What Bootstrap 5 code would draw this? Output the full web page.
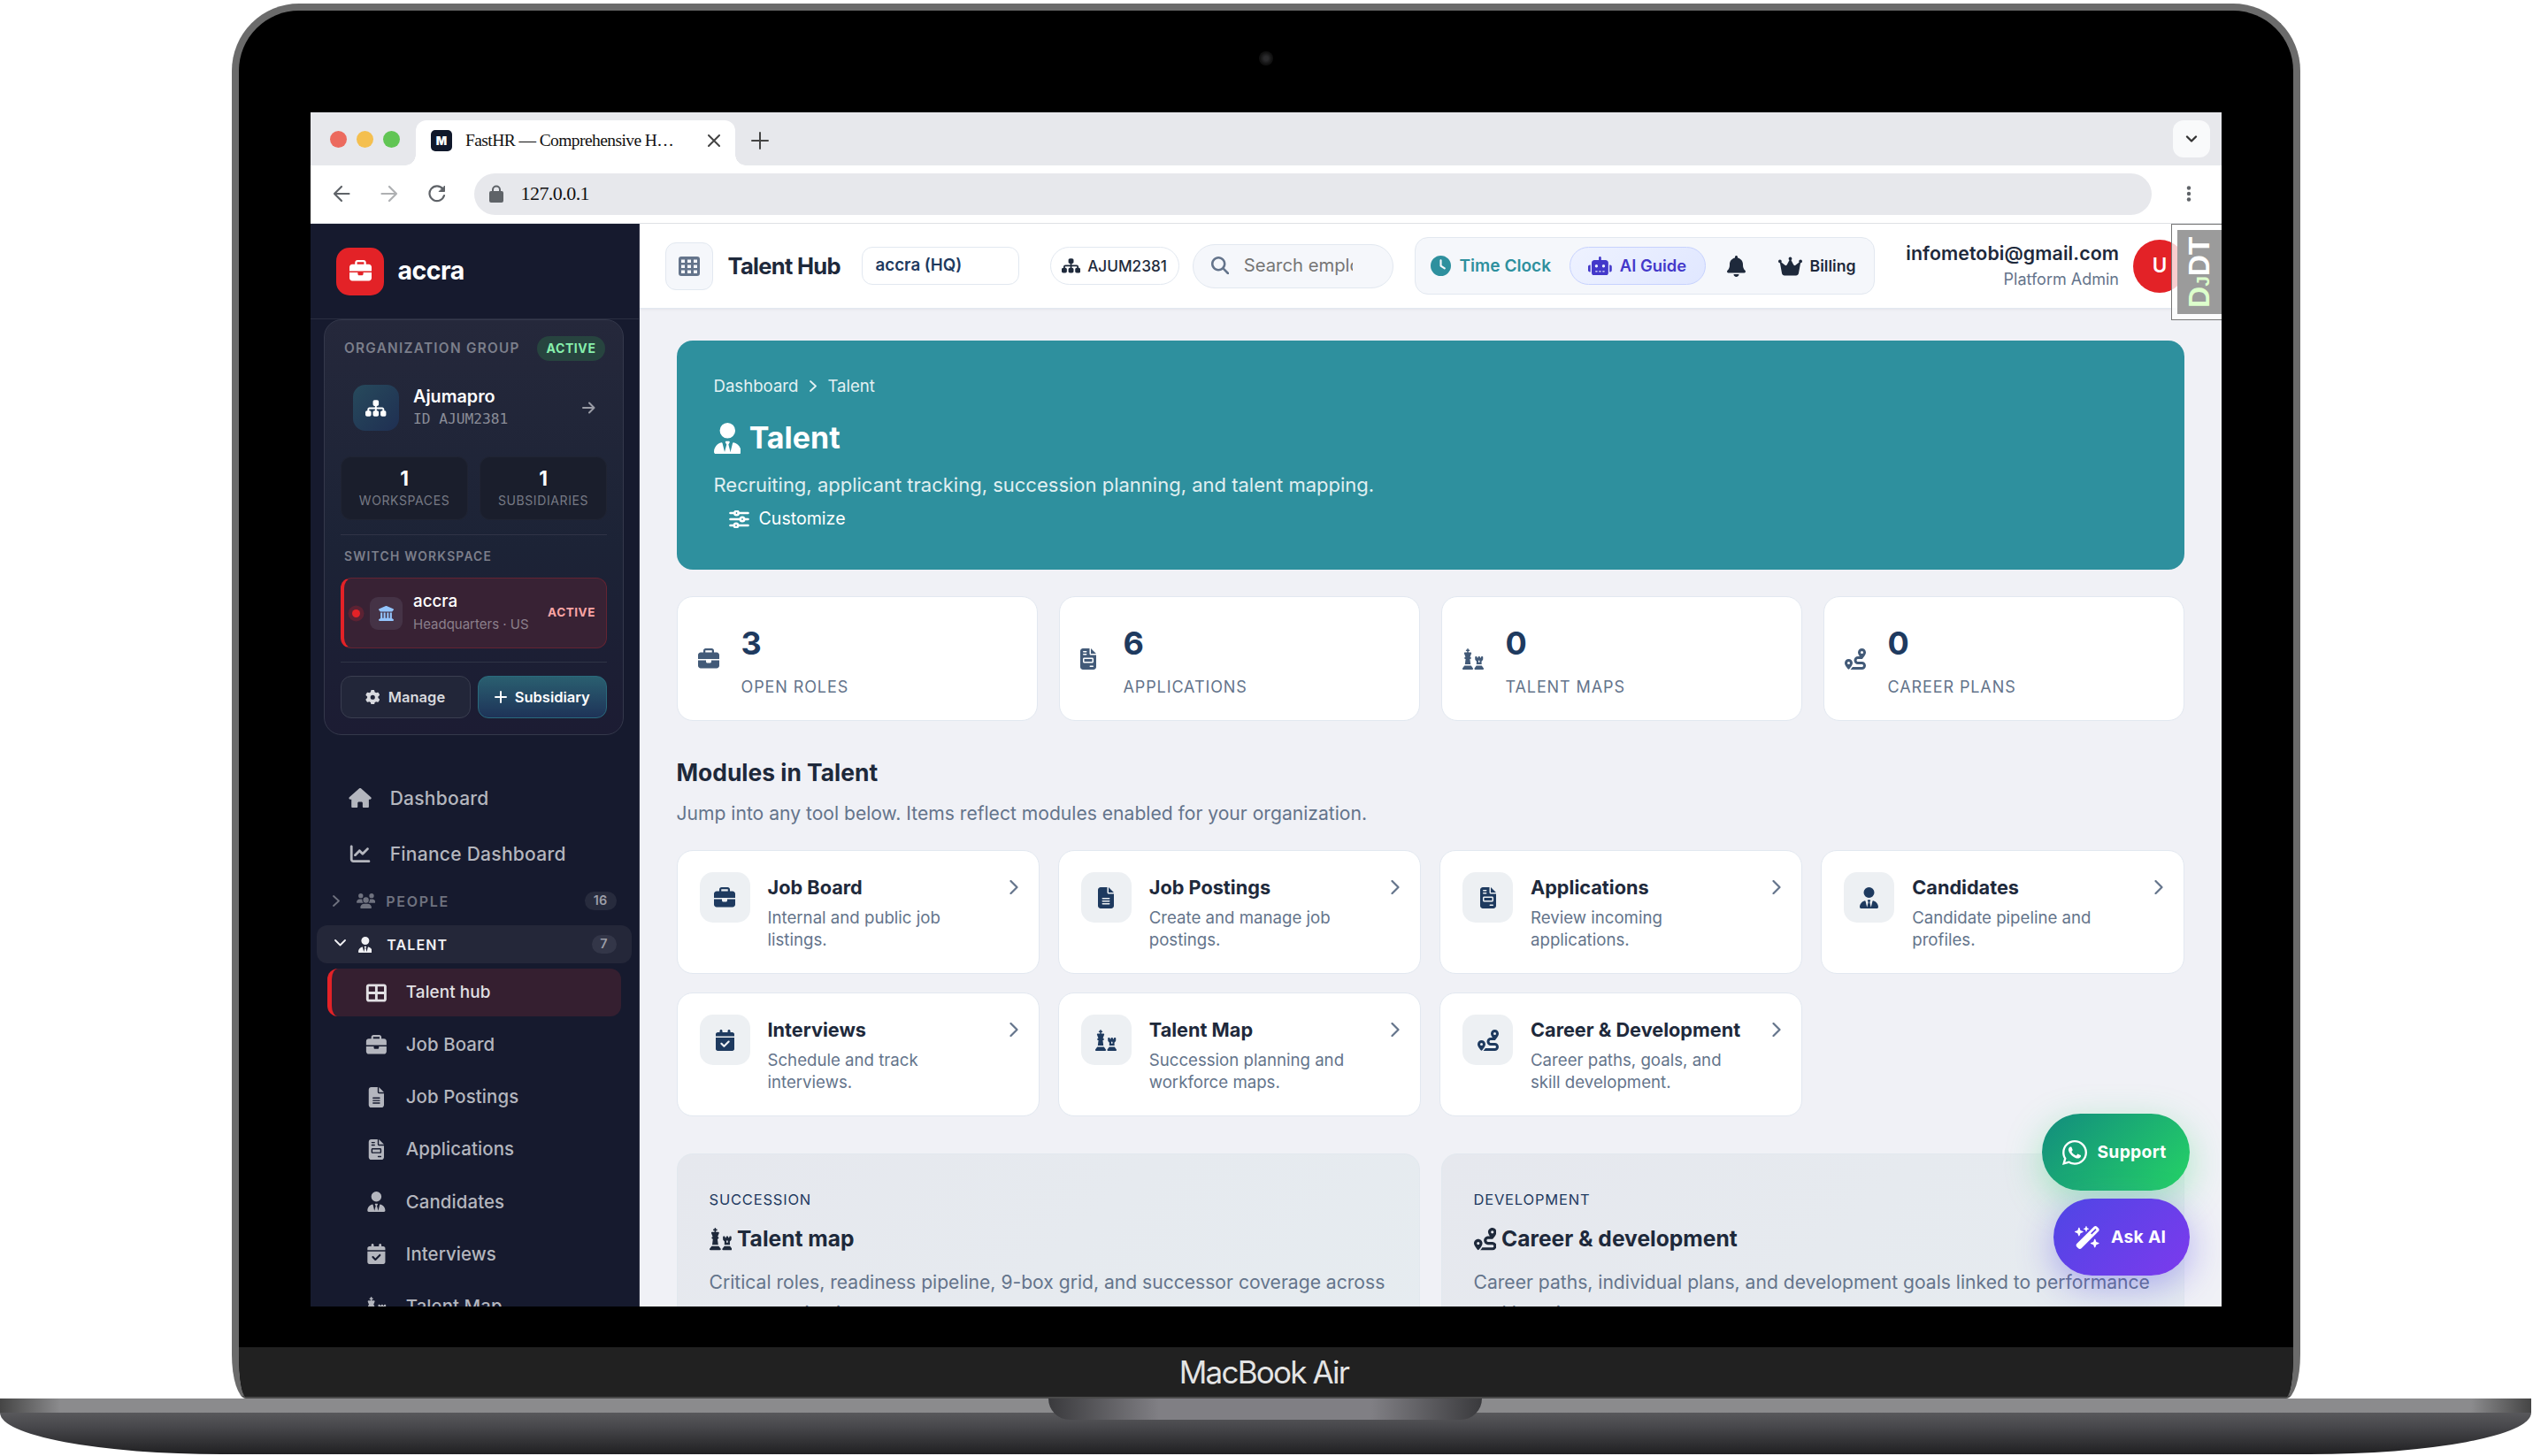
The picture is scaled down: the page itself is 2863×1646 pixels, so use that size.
<!DOCTYPE html>
<html lang="en">
<head>
    <meta charset="UTF-8">
    <meta name="viewport" content="width=device-width, initial-scale=1.0">
    <title>FastHR — Comprehensive HR</title>
    <!-- Bootstrap CSS -->
    <link href="https://cdn.jsdelivr.net/npm/bootstrap@5.3.0/dist/css/bootstrap.min.css" rel="stylesheet">
    <style>
        body {
            font-family: Inter, "Liberation Sans", sans-serif;
            background: #fff;
            color: #1e293b;
            line-height: 1;
            overflow: hidden;
        }
        .fi { width: 1em; height: 1em; fill: currentColor; flex: none; display: block; }
        .fi-384 { width: .75em; }
        .fi-448 { width: .875em; }
        .fi-576 { width: 1.125em; }
        .fi-640 { width: 1.25em; }
        .ln { fill: none; stroke: currentColor; stroke-linecap: round; stroke-linejoin: round; flex: none; display: block; }

        /* laptop */
        .laptop { width: 2861px; padding-top: 4px; }
        .lid {
            width: 2338px;
            height: 1577px;
            margin: 0 auto;
            background: #000;
            border: 8px solid #6b6b6b;
            border-bottom: 2px solid #4a4a4a;
            border-radius: 76px 76px 16px 16px / 76px 76px 50px 50px;
            overflow: hidden;
        }
        .bezel-top { height: 115px; padding-top: 8px; }
        .camera { width: 16px; height: 16px; background: radial-gradient(#2b2b2d 20%, #111 60%); }
        .screen { width: 2160px; height: 1350px; margin: 0 auto; }
        .chin { height: 56px; margin-top: 46px; padding-right: 4px; background: #212121; color: #e4e4e4; font-size: 35px; letter-spacing: -1.8px; }
        .base-bar { height: 16px; background: linear-gradient(90deg, #454545, #8b8b8d 68px, #8b8b8d 2793px, #454545); }
        .base-body { height: 47px; background: linear-gradient(#58585b, #47474b 35%, #202022); border-radius: 0 0 250px 250px / 0 0 47px 47px; }
        .notch { left: 1185px; top: 0; width: 490px; height: 24px; border-radius: 0 0 24px 24px; background: linear-gradient(90deg, #3a3a3d, #807f84 125px, #807f84 365px, #3a3a3d); }

        /* browser chrome */
        .tab-strip { height: 60px; background: #e7e8ec; padding-left: 22.5px; }
        .light { width: 19px; height: 19px; }
        .light-red { background: #ec6a5e; }
        .light-yellow { background: #f4bf4f; }
        .light-green { background: #61c554; }
        .page-tab { width: 361px; height: 51px; margin-left: 18px; padding: 0 17px 5px; background: #fff; border-radius: 12px 12px 0 0; font-family: "Liberation Serif", serif; font-size: 19.5px; color: #111; }
        .page-tab::before, .page-tab::after { content: ""; position: absolute; bottom: 0; width: 12px; height: 12px; }
        .page-tab::before { left: -12px; background: radial-gradient(circle at 0 0, transparent 11.5px, #fff 12px); }
        .page-tab::after { right: -12px; background: radial-gradient(circle at 100% 0, transparent 11.5px, #fff 12px); }
        .tab-text { letter-spacing: -.58px; }
        .favicon { width: 24px; height: 24px; border-radius: 5px; background: #10182b; color: #fff; font-size: 13px; font-family: Inter, sans-serif; font-weight: 900; margin-right: 15px; }
        .new-tab { margin: 4px 0 0 18px; color: #444; }
        .strip-btn { width: 42px; height: 42px; border-radius: 12px; background: #f9fafb; margin: 9px 13px 0 0; color: #333; }
        .tool-strip { height: 66px; border-bottom: 1px solid #dfe1e5; padding: 0 0 1px 25px; color: #5f6368; background: #fff; }
        .tool-strip .ln + .ln { margin-left: 34px; }
        .url-box { width: 1896px; height: 47px; margin-left: 32px; border-radius: 24px; background: #e7e8ec; padding: 0 0 1px 17px; font-family: "Liberation Serif", serif; font-size: 22px; color: #111; letter-spacing: -.55px; }
        .lock { width: 16px; height: 20px; margin-right: 20px; color: #5f6368; }
        .kebab { width: 6px; height: 18px; margin-left: 39px; }

        /* sidebar */
        .app { height: 1224px; }
        .side { width: 372px; background: #161a2e; border-right: 1px solid #2f3347; overflow: hidden; }
        .brand { height: 108px; border-bottom: 1px solid #2a2e41; padding-left: 29.5px; font-size: 28.5px; font-weight: 700; letter-spacing: -.5px; color: #fff; }
        .brand-icon { width: 54px; height: 54px; border-radius: 15px; background: #e32227; font-size: 25px; margin-right: 15.5px; }
        .org { width: 339px; height: 470px; margin-left: 15.5px; padding: 18px 18px 0; border: 1.5px solid #34384b; border-radius: 20px; background: linear-gradient(#25283b, #1c2336 55%, #1c1c33); }
        .org-head { height: 28px; padding: 0 2px 0 4px; }
        .eyebrow { font-size: 15.3px; font-weight: 600; letter-spacing: 1.3px; color: #7c7f8b; }
        .eyebrow-ws { font-size: 13.8px; letter-spacing: 1.24px; line-height: 24px; margin: 12px 0 12px 4px; }
        .pill-active { height: 28px; width: 77px; border-radius: 14px; background: #27443f; color: #86efac; font-size: 14px; font-weight: 700; letter-spacing: .6px; }
        .org-link { height: 52px; margin-top: 27px; padding: 0 13px 0 14px; }
        .org-icon { width: 52px; height: 52px; border-radius: 14px; background: linear-gradient(135deg, #274a5c, #1f2f52); font-size: 21px; color: #fff; margin-right: 16px; }
        .org-name { font-size: 19.8px; font-weight: 600; color: #fff; line-height: 26px; }
        .org-id { font-family: "DejaVu Sans Mono", monospace; font-size: 16.2px; color: #8a8d98; line-height: 26px; }
        .org-stats { margin-top: 29px; gap: 13px; }
        .org-stat { height: 72px; border-radius: 12px; background: #1a1e2c; border: 1px solid #202433; padding-top: 12px; }
        .org-stat b { font-size: 22.5px; font-weight: 700; color: #fff; line-height: 24px; }
        .org-stat span { font-size: 14px; letter-spacing: .6px; color: #777a85; line-height: 26px; }
        .rule { height: 1px; background: #303446; }
        .ws { height: 80px; border: 1px solid #642433; border-left: 4.5px solid #e32227; border-radius: 12px; background: #382234; padding: 0 12px 0 4px; }
        .ws-dot { width: 9px; height: 9px; background: #e32227; box-shadow: 0 0 0 4.5px #5c2233; margin: 0 11.5px 0 4.5px; }
        .ws-icon { width: 37px; height: 37px; border-radius: 9px; background: #453346; color: #93c5fd; font-size: 17px; margin-right: 12px; }
        .ws-name { font-size: 18.75px; font-weight: 500; line-height: 26px; color: #fff; }
        .ws-sub { font-size: 15px; line-height: 26px; color: #8b7f8b; }
        .ws-tag { font-size: 13.5px; font-weight: 700; letter-spacing: .55px; color: #fca5a5; }
        .org-btn { height: 48px; border-radius: 12px; font-size: 16.5px; font-weight: 600; gap: 9px; border: 1px solid #3a3e50; background: #222639; color: #d8d9de; }
        .org-btn-teal { border-color: #2a6a7c; background: linear-gradient(#2a5f70, #1e3358); color: #fff; }

        .side-nav { padding-top: 44px; }
        .nav-item-row { height: 54px; padding-left: 42px; color: #b4b6be; font-size: 21px; font-weight: 500; letter-spacing: .27px; }
        .nav-item-row + .nav-item-row { margin-top: 9px; }
        .nav-item-row .fi { width: 1.25em; font-size: 22.5px; margin-right: 20px; }
        .nav-group { height: 43px; margin: 5px 0 0 7px; width: 356px; padding: 0 17px 0 18px; border-radius: 12px; font-size: 16px; font-weight: 600; letter-spacing: 1.7px; color: #6f727f; }
        .nav-group .fi { font-size: 17px; margin: 0 12.5px 0 19px; }
        .nav-group.open { margin-top: 6px; background: #242739; color: #f1f1f4; letter-spacing: 1.1px; font-size: 16px; }
        .nav-group.open .ln { margin: -4px 0 0 2px; }
        .nav-group.open .fi { font-size: 18px; margin: 0 17px 0 14px; }
        .count { width: 36px; height: 21px; border-radius: 11px; background: #272b3d; color: #9b9da7; font-size: 14.4px; font-weight: 600; letter-spacing: 0; }
        .open .count { width: 28px; background: #333648; }
        .nav-sub { height: 54px; margin: 0 0 5.2px 19px; width: 332px; padding-left: 41px; border-radius: 12px; color: #b4b6be; font-size: 20.4px; font-weight: 500; letter-spacing: .1px; flex: none; }
        .nav-sub .fi { width: 1.25em; font-size: 23px; margin-right: 19.5px; }
        .nav-sub.on { margin-top: 6px; background: #351f30; border-left: 5px solid #e32227; padding-left: 36px; color: #e2e0e4; font-size: 18.9px; }

        /* header */
        .top { height: 96px; background: #fff; border-bottom: 1px solid #e2e8f0; box-shadow: 0 1px 3px rgba(15, 23, 42, .06); padding-left: 29.5px; }
        .grid-btn { width: 54px; height: 54px; border-radius: 12px; background: #f5f7fb; border: 1px solid #e2e8f0; color: #64748b; }
        .grid-btn .fi { width: 24px; height: 22px; }
        .page-name { font-size: 25.5px; font-weight: 700; letter-spacing: -.7px; margin-left: 16.5px; width: 151px; }
        .hq { width: 178px; height: 43px; border: 1px solid #e2e8f0; border-radius: 12px; padding-left: 15px; font-size: 18.75px; font-weight: 600; color: #1e3a5f; }
        .code { width: 146px; height: 43px; border: 1px solid #e2e8f0; border-radius: 22px; margin-left: 35px; font-size: 17.2px; font-weight: 500; gap: 8px; }
        .code .fi { font-size: 18.75px; }
        .find { width: 227px; height: 50px; border: 1px solid #e2e8f0; border-radius: 25px; background: #f5f7fb; margin-left: 15px; padding-left: 20px; font-size: 20.25px; color: #757575; gap: 17px; }
        .find .fi { color: #64748b; }
        .find span { width: 123px; overflow: hidden; white-space: nowrap; line-height: 1.4; }
        .tools { width: 520px; height: 65px; border: 1px solid #e2e8f0; border-radius: 15px; background: #f5f7fb; margin-left: 24px; padding-left: 17px; font-size: 18.4px; font-weight: 600; }
        .clock-in { width: 157px; gap: 10px; color: #2e909e; font-size: 19.1px; }
        .clock-in .fi { font-size: 23px; }
        .guide { width: 154px; height: 43px; border: 1px solid #c7d2fe; border-radius: 22px; background: linear-gradient(135deg, #eef2ff, #e0e7ff); color: #4338ca; gap: 9px; }
        .guide .fi { font-size: 21.5px; }
        .bell { font-size: 24px; margin-left: 24px; }
        .billing { margin-left: 37px; gap: 9px; font-size: 17.7px; }
        .billing .fi { font-size: 24px; }
        .who { width: 276.5px; text-align: right; }
        .who-mail { font-size: 21.3px; font-weight: 600; line-height: 30px; letter-spacing: .1px; }
        .who-role { font-size: 18px; line-height: 30px; color: #64748b; }
        .avatar { width: 60px; height: 60px; background: #e32227; color: #fff; font-size: 22.5px; font-weight: 600; margin-left: 16px; }
        .djdt { right: 0; top: 0; width: 57px; height: 109px; border: 1px solid #777; border-right: 0; background: rgba(255, 255, 255, .78); padding: 6px 0 6px 6px; }
        .djdt-in { width: 50px; background: #9b9b9b; }
        .djdt-in span { transform: rotate(-90deg); flex: none; white-space: nowrap; font-family: "Liberation Sans", sans-serif; font-weight: 700; font-size: 33.5px; color: #fff; }
        .djdt-in i { font-style: normal; color: #dfc; }
        .djdt-in i + i { font-size: 21px; }

        /* page */
        .pagebody { background: #f0f1f6; }
        .body-pad { padding: 36px 42px 0; }
        .hero { height: 259px; border-radius: 18px; background: #2e909e; color: #fff; padding: 36px 42px 0; }
        .crumbs { height: 30px; font-size: 18.6px; color: #e3f1f3; gap: 12.5px; }
        .hero h1 { height: 48px; margin: 20px 0 0; font-size: 34px; font-weight: 700; gap: 9.5px; }
        .hero h1 .fi { font-size: 35px; }
        .hero p { height: 34px; margin: 12px 0 0; line-height: 34px; font-size: 22px; color: #e0eff1; }
        .customize { height: 30px; margin: 7px 0 0 17px; font-size: 19.6px; gap: 11px; }
        .stat-grid { display: grid; grid-template-columns: repeat(4, 1fr); gap: 24px; margin-top: 30px; }
        .tile { background: #fff; border: 1px solid #e2e8f0; border-radius: 18px; }
        .stat { height: 141px; padding-left: 23px; color: #425a78; font-size: 24px; }
        .stat-icon { width: 49px; }
        .stat b { display: block; font-size: 36px; line-height: 44px; font-weight: 700; color: #1e3a5f; }
        .stat span { display: block; font-size: 18px; line-height: 25px; margin: 15px 0 -5px; letter-spacing: .9px; color: #64748b; }
        .sec-title { height: 36px; margin: 40px 0 0; line-height: 36px; font-size: 26.4px; font-weight: 700; }
        .sec-sub { height: 30px; margin: 14px 0 26px; line-height: 30px; font-size: 21.1px; color: #64748b; }
        .mod-grid { display: grid; grid-template-columns: repeat(4, 1fr); gap: 21px; }
        .mod { height: 140px; padding: 24px 23px 0 25px; }
        .mod > .ln { margin-top: 9px; color: #64748b; }
        .mod-icon { width: 57px; height: 57px; border-radius: 15px; background: #edf0f3; color: #1e3a5f; font-size: 24px; margin-right: 20px; }
        .mod h3 { font-size: 21.7px; line-height: 36px; font-weight: 700; margin: -1px 0 0; white-space: nowrap; }
        .mod p { font-size: 18.65px; line-height: 25.3px; color: #64748b; margin: 4px 0 0; white-space: nowrap; }
        .promo-grid { display: grid; grid-template-columns: 1fr 1fr; gap: 24px; margin-top: 42px; }
        .promo { height: 260px; border: 1px solid #e2e8ee; border-radius: 18px; background: linear-gradient(135deg, #e6e8ee, #e6ecf0); padding: 37px 36px 0; }
        .promo-tag { height: 28px; line-height: 28px; font-size: 16.5px; letter-spacing: .8px; color: #1e3a5f; }
        .promo h3 { height: 36px; margin: 13px 0 0; font-size: 24.6px; font-weight: 700; gap: 6px; }
        .promo h3 .fi { font-size: 25.5px; }
        .promo p { margin: 12.5px 0 0; font-size: 21.1px; line-height: 35.5px; color: #64748b; }

        .fab { right: 36px; height: 87px; padding-right: 2px; border-radius: 44px; color: #fff; font-size: 19.3px; font-weight: 700; letter-spacing: .3px; }
        .fab-support { top: 1006px; width: 167px; gap: 11px; background: linear-gradient(135deg, #128c7e, #25d366); box-shadow: 0 12px 42px rgba(37, 211, 102, .35); }
        .fab-support .fi { font-size: 32px; }
        .fab-ai { top: 1102px; width: 154px; gap: 12px; background: linear-gradient(135deg, #4f46e5, #7c3aed); box-shadow: 0 12px 42px rgba(79, 70, 229, .4); }
        .fab-ai .fi { font-size: 26px; }
    </style>
</head>
<body>
    <svg width="0" height="0" class="position-absolute">
        <symbol id="briefcase" viewBox="0 0 512 512"><path d="M184 48H328c4.4 0 8 3.6 8 8V96H176V56c0-4.4 3.6-8 8-8zm-56 8V96H64C28.7 96 0 124.7 0 160v96H192 320 512V160c0-35.3-28.7-64-64-64H384V56c0-30.9-25.1-56-56-56H184c-30.9 0-56 25.1-56 56zM512 288H320v32c0 17.7-14.3 32-32 32H224c-17.7 0-32-14.3-32-32V288H0V416c0 35.3 28.7 64 64 64H448c35.3 0 64-28.7 64-64V288z"/></symbol>
        <symbol id="sitemap" viewBox="0 0 576 512"><path d="M208 80c0-26.5 21.5-48 48-48h64c26.5 0 48 21.5 48 48v64c0 26.5-21.5 48-48 48h-8v40H464c30.9 0 56 25.1 56 56v32h8c26.5 0 48 21.5 48 48v64c0 26.5-21.5 48-48 48H464c-26.5 0-48-21.5-48-48V368c0-26.5 21.5-48 48-48h8V288c0-4.4-3.6-8-8-8H312v40h8c26.5 0 48 21.5 48 48v64c0 26.5-21.5 48-48 48H256c-26.5 0-48-21.5-48-48V368c0-26.5 21.5-48 48-48h8V280H112c-4.4 0-8 3.6-8 8v32h8c26.5 0 48 21.5 48 48v64c0 26.5-21.5 48-48 48H48c-26.5 0-48-21.5-48-48V368c0-26.5 21.5-48 48-48h8V288c0-30.9 25.1-56 56-56H264V192h-8c-26.5 0-48-21.5-48-48V80z"/></symbol>
        <symbol id="house" viewBox="0 0 576 512"><path d="M575.8 255.5c0 18-15 32.1-32 32.1h-32l.7 160.2c0 2.7-.2 5.4-.5 8.1V472c0 22.1-17.9 40-40 40H456c-1.1 0-2.2 0-3.3-.1c-1.4 .1-2.8 .1-4.2 .1H416 392c-22.1 0-40-17.9-40-40V448 384c0-17.7-14.3-32-32-32H256c-17.7 0-32 14.3-32 32v64 24c0 22.1-17.9 40-40 40H160 128.1c-1.5 0-3-.1-4.5-.2c-1.2 .1-2.4 .2-3.6 .2H104c-22.1 0-40-17.9-40-40V360c0-.9 0-1.9 .1-2.8V287.6H32c-18 0-32-14-32-32.1c0-9 3-17 10-24L266.4 8c7-7 15-8 22-8s15 2 21 7L564.8 231.5c8 7 12 15 11 24z"/></symbol>
        <symbol id="chart" viewBox="0 0 512 512"><path d="M64 64c0-17.7-14.3-32-32-32S0 46.3 0 64V400c0 44.2 35.8 80 80 80H480c17.7 0 32-14.3 32-32s-14.3-32-32-32H80c-8.8 0-16-7.2-16-16V64zm406.6 86.6c12.5-12.5 12.5-32.8 0-45.3s-32.8-12.5-45.3 0L320 210.7l-57.4-57.4c-12.5-12.5-32.8-12.5-45.3 0l-112 112c-12.5 12.5-12.5 32.8 0 45.3s32.8 12.5 45.3 0L240 221.3l57.4 57.4c12.5 12.5 32.8 12.5 45.3 0l128-128z"/></symbol>
        <symbol id="users" viewBox="0 0 640 512"><path d="M144 0a80 80 0 1 1 0 160A80 80 0 1 1 144 0zM512 0a80 80 0 1 1 0 160A80 80 0 1 1 512 0zM0 298.7C0 239.8 47.8 192 106.7 192h42.7c15.9 0 31 3.5 44.6 9.7c-1.3 7.2-1.9 14.7-1.9 22.3c0 38.2 16.8 72.5 43.3 96c-.2 0-.4 0-.7 0H21.3C9.6 320 0 310.4 0 298.7zM405.3 320c-.2 0-.4 0-.7 0c26.6-23.5 43.3-57.8 43.3-96c0-7.6-.7-15-1.9-22.3c13.6-6.3 28.7-9.7 44.6-9.7h42.7C592.2 192 640 239.8 640 298.7c0 11.8-9.6 21.3-21.3 21.3H405.3zM224 224a96 96 0 1 1 192 0 96 96 0 1 1 -192 0zM128 485.3C128 411.7 187.7 352 261.3 352H378.7C452.3 352 512 411.7 512 485.3c0 14.7-11.9 26.7-26.7 26.7H154.7c-14.7 0-26.7-11.9-26.7-26.7z"/></symbol>
        <symbol id="user-tie" viewBox="0 0 448 512"><path d="M96 128a128 128 0 1 0 256 0A128 128 0 1 0 96 128zm94.5 200.2l18.6 31L175.8 483.1l-36-146.9c-2-8.1-9.8-13.4-17.9-11.3C51.9 342.4 0 405.8 0 481.3c0 17 13.8 30.7 30.7 30.7H162.5c0 0 0 0 .1 0H168 280h5.5c0 0 0 0 .1 0H417.3c17 0 30.7-13.8 30.7-30.7c0-75.5-51.9-138.9-121.9-156.4c-8.1-2-15.9 3.3-17.9 11.3l-36 146.9L238.9 359.2l18.6-31c6.4-10.7-1.3-24.2-13.7-24.2H224 204.3c-12.4 0-20.1 13.6-13.7 24.2z"/></symbol>
        <symbol id="file-lines" viewBox="0 0 384 512"><path d="M64 0C28.7 0 0 28.7 0 64V448c0 35.3 28.7 64 64 64H320c35.3 0 64-28.7 64-64V160H256c-17.7 0-32-14.3-32-32V0H64zM256 0V128H384L256 0zM112 256H272c8.8 0 16 7.2 16 16s-7.2 16-16 16H112c-8.8 0-16-7.2-16-16s7.2-16 16-16zm0 64H272c8.8 0 16 7.2 16 16s-7.2 16-16 16H112c-8.8 0-16-7.2-16-16s7.2-16 16-16zm0 64H272c8.8 0 16 7.2 16 16s-7.2 16-16 16H112c-8.8 0-16-7.2-16-16s7.2-16 16-16z"/></symbol>
        <symbol id="invoice" viewBox="0 0 384 512"><path fill-rule="evenodd" d="M64 0C28.7 0 0 28.7 0 64V448c0 35.3 28.7 64 64 64H320c35.3 0 64-28.7 64-64V160H256c-17.7 0-32-14.3-32-32V0H64zM256 0V128H384L256 0zM80 64h64c8.8 0 16 7.2 16 16s-7.2 16-16 16H80c-8.8 0-16-7.2-16-16s7.2-16 16-16zm0 64h64c8.8 0 16 7.2 16 16s-7.2 16-16 16H80c-8.8 0-16-7.2-16-16s7.2-16 16-16zm16 96H288c17.7 0 32 14.3 32 32v64c0 17.7-14.3 32-32 32H96c-17.7 0-32-14.3-32-32V256c0-17.7 14.3-32 32-32zm0 32v64H288V256H96zM240 416h64c8.8 0 16 7.2 16 16s-7.2 16-16 16H240c-8.8 0-16-7.2-16-16s7.2-16 16-16z"/></symbol>
        <symbol id="calendar" viewBox="0 0 448 512"><path fill-rule="evenodd" d="M128 0c17.7 0 32 14.3 32 32V64H288V32c0-17.7 14.3-32 32-32s32 14.3 32 32V64h48c26.5 0 48 21.5 48 48v48H0V112C0 85.5 21.5 64 48 64H96V32c0-17.7 14.3-32 32-32zM0 192H448V464c0 26.5-21.5 48-48 48H48c-26.5 0-48-21.5-48-48V192zM329 305c9.4-9.4 9.4-24.6 0-33.9s-24.6-9.4-33.9 0l-95 95-47-47c-9.4-9.4-24.6-9.4-33.9 0s-9.4 24.6 0 33.9l64 64c9.4 9.4 24.6 9.4 33.9 0L329 305z"/></symbol>
        <symbol id="cells" viewBox="0 0 512 512"><path fill-rule="evenodd" d="M448 96V224H288V96H448zm0 192V416H288V288H448zM224 224H64V96H224V224zM64 288H224V416H64V288zM64 32C28.7 32 0 60.7 0 96V416c0 35.3 28.7 64 64 64H448c35.3 0 64-28.7 64-64V96c0-35.3-28.7-64-64-64H64z"/></symbol>
        <symbol id="grid" viewBox="0 0 24 22"><path fill-rule="evenodd" d="M3 0H21Q24 0 24 3V19Q24 22 21 22H3Q0 22 0 19V3Q0 0 3 0zM3 3.500v3.500h4V3.500zm7 0v3.500h4V3.500zm7 0v3.500h4V3.500zM3 9.500v3.500h4v-3.500zm7 0v3.500h4v-3.500zm7 0v3.500h4v-3.500zM3 15.500v3.500h4v-3.500zm7 0v3.500h4v-3.500zm7 0v3.500h4v-3.500z"/></symbol>
        <symbol id="clock" viewBox="0 0 512 512"><path fill-rule="evenodd" d="M256 0a256 256 0 1 1 0 512A256 256 0 1 1 256 0zM232 120V256c0 8 4 15.5 10.7 20l96 64c11 7.4 25.9 4.4 33.3-6.7s4.4-25.9-6.7-33.3L280 243.2V120c0-13.3-10.7-24-24-24s-24 10.7-24 24z"/></symbol>
        <symbol id="robot" viewBox="0 0 640 512"><path fill-rule="evenodd" d="M320 0c17.7 0 32 14.3 32 32V96H472c39.8 0 72 32.2 72 72V440c0 39.8-32.2 72-72 72H168c-39.8 0-72-32.2-72-72V168c0-39.8 32.2-72 72-72H288V32c0-17.7 14.3-32 32-32zM208 384c-8.8 0-16 7.2-16 16s7.2 16 16 16h32c8.8 0 16-7.2 16-16s-7.2-16-16-16H208zM304 384c-8.8 0-16 7.2-16 16s7.2 16 16 16h32c8.8 0 16-7.2 16-16s-7.2-16-16-16H304zM400 384c-8.8 0-16 7.2-16 16s7.2 16 16 16h32c8.8 0 16-7.2 16-16s-7.2-16-16-16H400zM264 256a40 40 0 1 0 -80 0 40 40 0 1 0 80 0zm152 40a40 40 0 1 0 0-80 40 40 0 1 0 0 80zM48 224H64V416H48c-26.5 0-48-21.5-48-48V272c0-26.5 21.5-48 48-48zm544 0c26.5 0 48 21.5 48 48v96c0 26.5-21.5 48-48 48H576V224h16z"/></symbol>
        <symbol id="bell" viewBox="0 0 448 512"><path d="M224 0c-17.7 0-32 14.3-32 32V51.2C119 66 64 130.6 64 208v18.8c0 47-17.3 92.4-48.5 127.6l-7.4 8.3c-8.4 9.4-10.4 22.9-5.3 34.4S19.4 416 32 416H416c12.6 0 24-7.4 29.2-18.9s3.1-25-5.3-34.4l-7.4-8.3C401.3 319.2 384 273.9 384 226.8V208c0-77.4-55-142-128-156.8V32c0-17.7-14.3-32-32-32zm45.3 493.3c12-12 18.7-28.3 18.7-45.3H224 160c0 17 6.7 33.3 18.7 45.3s28.3 18.7 45.3 18.7s33.3-6.7 45.3-18.7z"/></symbol>
        <symbol id="crown" viewBox="0 0 576 512"><path d="M309 106c11.4-7 19-19.7 19-34c0-22.1-17.9-40-40-40s-40 17.9-40 40c0 14.4 7.6 27 19 34L209.7 220.6c-9.1 18.2-32.7 23.4-48.6 10.7L72 160c5-6.7 8-15 8-24c0-22.1-17.9-40-40-40S0 113.9 0 136s17.9 40 40 40c.2 0 .5 0 .7 0L86.4 427.4c5.5 30.4 32 52.6 63 52.6H426.6c30.9 0 57.4-22.1 63-52.6L535.3 176c.2 0 .5 0 .7 0c22.1 0 40-17.9 40-40s-17.9-40-40-40s-40 17.9-40 40c0 9 3 17.3 8 24l-89.1 71.3c-15.9 12.7-39.5 7.5-48.6-10.7L309 106z"/></symbol>
        <symbol id="search" viewBox="0 0 512 512"><path d="M416 208c0 45.9-14.9 88.3-40 122.7L502.6 457.4c12.5 12.5 12.5 32.8 0 45.3s-32.8 12.5-45.3 0L330.7 376c-34.4 25.2-76.8 40-122.7 40C93.1 416 0 322.9 0 208S93.1 0 208 0S416 93.1 416 208zM208 352a144 144 0 1 0 0-288 144 144 0 1 0 0 288z"/></symbol>
        <symbol id="gear" viewBox="0 0 512 512"><path d="M495.9 166.6c3.2 8.7 .5 18.4-6.4 24.6l-43.3 39.4c1.1 8.3 1.7 16.8 1.7 25.4s-.6 17.1-1.7 25.4l43.3 39.4c6.9 6.2 9.6 15.9 6.4 24.6c-4.4 11.9-9.7 23.3-15.8 34.3l-4.7 8.1c-6.6 11-14 21.4-22.1 31.2c-5.9 7.2-15.7 9.6-24.5 6.8l-55.7-17.7c-13.4 10.3-28.2 18.9-44 25.4l-12.5 57.1c-2 9.1-9 16.3-18.2 17.8c-13.8 2.3-28 3.5-42.5 3.5s-28.7-1.2-42.5-3.5c-9.2-1.5-16.2-8.7-18.2-17.8l-12.5-57.1c-15.8-6.5-30.6-15.1-44-25.4L83.1 425.9c-8.8 2.8-18.6 .3-24.5-6.8c-8.1-9.8-15.5-20.2-22.1-31.2l-4.7-8.1c-6.1-11-11.4-22.4-15.8-34.3c-3.2-8.7-.5-18.4 6.4-24.6l43.3-39.4C64.6 273.1 64 264.6 64 256s.6-17.1 1.7-25.4L22.4 191.2c-6.9-6.2-9.6-15.9-6.4-24.6c4.4-11.9 9.7-23.3 15.8-34.3l4.7-8.1c6.6-11 14-21.4 22.1-31.2c5.9-7.2 15.7-9.6 24.5-6.8l55.7 17.7c13.4-10.3 28.2-18.9 44-25.4l12.5-57.1c2-9.1 9-16.3 18.2-17.8C227.3 1.2 241.5 0 256 0s28.7 1.2 42.5 3.5c9.2 1.5 16.2 8.7 18.2 17.8l12.5 57.1c15.8 6.5 30.6 15.1 44 25.4l55.7-17.7c8.8-2.8 18.6-.3 24.5 6.8c8.1 9.8 15.5 20.2 22.1 31.2l4.7 8.1c6.1 11 11.4 22.4 15.8 34.3zM256 336a80 80 0 1 0 0-160 80 80 0 1 0 0 160z"/></symbol>
        <symbol id="columns" viewBox="0 0 512 512"><path d="M243.4 2.6l-224 96c-14 6-21.8 21-18.7 35.8S16.8 160 32 160v8c0 13.3 10.7 24 24 24H456c13.3 0 24-10.7 24-24v-8c15.2 0 28.3-10.7 31.3-25.6s-4.8-29.9-18.7-35.8l-224-96c-8-3.4-17.2-3.4-25.2 0zM128 224H64V420.3c-.6 .3-1.2 .7-1.8 1.1l-48 32c-11.7 7.8-17 22.4-12.9 35.9S17.9 512 32 512H480c14.1 0 26.5-9.2 30.6-22.7s-1.1-28.1-12.9-35.9l-48-32c-.6-.4-1.2-.7-1.8-1.1V224H384V416H344V224H280V416H232V224H168V416H128V224z"/></symbol>
        <symbol id="chess" viewBox="0 0 512 512"><path fill-rule="evenodd" d="M144 16c0-8.8-7.2-16-16-16s-16 7.2-16 16V32H96c-8.8 0-16 7.2-16 16s7.2 16 16 16h16V96H60.2C49.1 96 40 105.1 40 116.2c0 2.5 .5 4.9 1.3 7.3L73.8 208H72c-13.3 0-24 10.7-24 24s10.7 24 24 24h4L60 384H196L180 256h4c13.3 0 24-10.7 24-24s-10.7-24-24-24h-1.8l32.5-84.5c.9-2.3 1.3-4.8 1.3-7.3c0-11.2-9.1-20.2-20.2-20.2H144V64h16c8.8 0 16-7.2 16-16s-7.2-16-16-16H144V16zM48 416L4.8 473.6C1.7 477.8 0 482.8 0 488c0 13.3 10.7 24 24 24H232c13.3 0 24-10.7 24-24c0-5.2-1.7-10.2-4.8-14.4L208 416H48zm288 0l-43.2 57.6c-3.1 4.2-4.8 9.2-4.8 14.4c0 13.3 10.7 24 24 24H488c13.3 0 24-10.7 24-24c0-5.2-1.7-10.2-4.8-14.4L464 416H336zM304 208v51.9c0 7.8 2.8 15.3 8 21.1L339.2 312 337 384H462.5l-3.3-72 28.3-30.8c5.4-5.9 8.5-13.6 8.5-21.7V208c0-8.8-7.2-16-16-16H464c-8.8 0-16 7.2-16 16v16H424V208c0-8.8-7.2-16-16-16H392c-8.8 0-16 7.2-16 16v16H352V208c0-8.8-7.2-16-16-16H320c-8.8 0-16 7.2-16 16zm80 96c0-8.8 7.2-16 16-16s16 7.2 16 16v32H384V304z"/></symbol>
        <symbol id="route" viewBox="0 0 512 512"><path fill-rule="evenodd" d="M512 96c0 50.2-59.1 125.1-84.6 155c-3.8 4.4-9.4 6.1-14.5 5H320c-17.7 0-32 14.3-32 32s14.3 32 32 32h96c53 0 96 43 96 96s-43 96-96 96H139.6c8.7-9.9 19.3-22.6 30-36.8c6.3-8.4 12.8-17.6 19-27.2H416c17.7 0 32-14.3 32-32s-14.3-32-32-32H320c-53 0-96-43-96-96s43-96 96-96h39.8c-21-31.5-39.8-67.7-39.8-96c0-53 43-96 96-96s96 43 96 96zM117.1 489.1c-3.8 4.3-7.2 8.1-10.1 11.3l-1.8 2-.2-.2c-6 4.6-14.6 4-20-1.8C59.8 473 0 402.5 0 352c0-53 43-96 96-96s96 43 96 96c0 30-21.1 67-43.5 97.9c-10.7 14.7-21.7 28-30.8 38.5l-.6 .7zM128 352a32 32 0 1 0 -64 0 32 32 0 1 0 64 0zM416 128a32 32 0 1 0 0-64 32 32 0 1 0 0 64z"/></symbol>
        <symbol id="whatsapp" viewBox="0 0 448 512"><path d="M380.9 97.1C339 55.1 283.2 32 223.9 32c-122.4 0-222 99.6-222 222 0 39.1 10.2 77.3 29.6 111L0 480l117.7-30.9c32.4 17.7 68.9 27 106.1 27h.1c122.3 0 224.1-99.6 224.1-222 0-59.3-25.2-115-67.1-157zm-157 341.6c-33.2 0-65.7-8.9-94-25.7l-6.7-4-69.8 18.3L72 359.2l-4.4-7c-18.5-29.4-28.2-63.3-28.2-98.2 0-101.7 82.8-184.5 184.6-184.5 49.3 0 95.6 19.2 130.4 54.1 34.8 34.9 56.2 81.2 56.1 130.5 0 101.8-84.9 184.6-186.6 184.6zm101.2-138.2c-5.5-2.8-32.8-16.2-37.9-18-5.1-1.9-8.8-2.8-12.5 2.8-3.7 5.6-14.3 18-17.6 21.8-3.2 3.7-6.5 4.2-12 1.4-32.6-16.3-54-29.1-75.5-66-5.7-9.8 5.7-9.1 16.3-30.3 1.8-3.7.9-6.9-.5-9.7-1.4-2.8-12.5-30.1-17.1-41.2-4.5-10.8-9.1-9.3-12.5-9.5-3.2-.2-6.9-.2-10.6-.2-3.7 0-9.7 1.4-14.8 6.9-5.1 5.6-19.4 19-19.4 46.3 0 27.3 19.9 53.7 22.6 57.4 2.8 3.7 39.1 59.7 94.8 83.8 35.2 15.2 49 16.5 66.6 13.9 10.7-1.6 32.8-13.4 37.4-26.4 4.6-13 4.6-24.1 3.2-26.4-1.3-2.5-5-3.9-10.5-6.6z"/></symbol>
        <symbol id="wand" viewBox="0 0 576 512"><path fill-rule="evenodd" d="M234.7 42.7L197 56.8c-3 1.1-5 4-5 7.2s2 6.1 5 7.2l37.7 14.1L248.8 123c1.1 3 4 5 7.2 5s6.1-2 7.2-5l14.1-37.7L315 71.2c3-1.1 5-4 5-7.2s-2-6.1-5-7.2L277.3 42.7 263.2 5c-1.1-3-4-5-7.2-5s-6.1 2-7.2 5L234.7 42.7zM46.1 395.4c-18.7 18.7-18.7 49.1 0 67.9l34.6 34.6c18.7 18.7 49.1 18.7 67.9 0L529.9 116.5c18.7-18.7 18.7-49.1 0-67.9L495.3 14.1c-18.7-18.7-49.1-18.7-67.9 0L46.1 395.4zM484.6 82.6l-105 105-23.3-23.3 105-105 23.3 23.3zM7.5 117.2C3 118.9 0 123.2 0 128s3 9.1 7.5 10.8L64 160l21.2 56.5c1.7 4.5 6 7.5 10.8 7.5s9.1-3 10.8-7.5L128 160l56.5-21.2c4.5-1.7 7.5-6 7.5-10.8s-3-9.1-7.5-10.8L128 96 106.8 39.5C105.1 35 100.8 32 96 32s-9.1 3-10.8 7.5L64 96 7.5 117.2zm352 256c-4.5 1.7-7.5 6-7.5 10.8s3 9.1 7.5 10.8L416 416l21.2 56.5c1.7 4.5 6 7.5 10.8 7.5s9.1-3 10.8-7.5L480 416l56.5-21.2c4.5-1.7 7.5-6 7.5-10.8s-3-9.1-7.5-10.8L480 352l-21.2-56.5c-1.7-4.5-6-7.5-10.8-7.5s-9.1 3-10.8 7.5L416 352l-56.5 21.2z"/></symbol>
    </svg>

    <div class="laptop">
        <div class="lid">
            <div class="bezel-top d-flex justify-content-center align-items-center"><div class="camera rounded-circle mb-3"></div></div>
            <div class="screen d-flex flex-column overflow-hidden">

                <!-- Browser chrome -->
                <div class="tab-strip d-flex align-items-end">
                    <div class="d-flex align-self-center" style="gap:11px">
                        <div class="light light-red rounded-circle"></div>
                        <div class="light light-yellow rounded-circle"></div>
                        <div class="light light-green rounded-circle"></div>
                    </div>
                    <div class="page-tab position-relative d-flex align-items-center">
                        <div class="favicon d-flex align-items-center justify-content-center">M</div>
                        <span class="tab-text text-nowrap">FastHR — Comprehensive H…</span>
                        <svg class="ln ms-auto" width="14" height="14" viewBox="0 0 14 14" stroke-width="2" color="#444"><path d="M1 1l12 12M13 1L1 13"/></svg>
                    </div>
                    <svg class="ln new-tab align-self-center" width="20" height="20" viewBox="0 0 20 20" stroke-width="2"><path d="M10 1v18M1 10h18"/></svg>
                    <div class="strip-btn ms-auto align-self-start d-flex align-items-center justify-content-center">
                        <svg class="ln" width="14" height="9" viewBox="0 0 14 9" stroke-width="2.3"><path d="M2 1.5l5 5 5-5"/></svg>
                    </div>
                </div>
                <div class="tool-strip d-flex align-items-center">
                    <svg class="ln" width="20" height="20" viewBox="0 0 20 20" stroke-width="2.2"><path d="M18.5 10H2M10 2l-8 8 8 8"/></svg>
                    <svg class="ln opacity-50" width="20" height="20" viewBox="0 0 20 20" stroke-width="2.2"><path d="M1.5 10H18M10 2l8 8-8 8"/></svg>
                    <svg class="ln" width="20" height="20" viewBox="0 0 20 20" stroke-width="2.2"><path d="M18 12A8.4 8.4 0 1 1 16.500 4.500"/><path d="M18.500 1.500V7.500H12.500z" fill="currentColor" stroke-width="1"/></svg>
                    <div class="url-box d-flex align-items-center">
                        <svg class="fi lock" viewBox="0 0 16 20"><path fill-rule="evenodd" d="M3 7V5.500a5 5 0 0 1 10 0V7h1q2 0 2 2v9q0 2-2 2H2q-2 0-2-2V9q0-2 2-2zM5 7h6V5.500a3 3 0 0 0-6 0z"/></svg>
                        <span>127.0.0.1</span>
                    </div>
                    <svg class="fi kebab" viewBox="0 0 6 18"><circle cx="3" cy="2.500" r="2.200"/><circle cx="3" cy="9" r="2.200"/><circle cx="3" cy="15.500" r="2.200"/></svg>
                </div>

                <div class="app d-flex position-relative">
                    <!-- Sidebar -->
                    <aside class="side d-flex flex-column flex-shrink-0">
                        <div class="brand d-flex align-items-center flex-shrink-0">
                            <div class="brand-icon d-flex align-items-center justify-content-center"><svg class="fi"><use href="#briefcase"/></svg></div>
                            <span>accra</span>
                        </div>
                        <div class="org flex-shrink-0">
                            <div class="org-head d-flex align-items-center justify-content-between">
                                <span class="eyebrow">ORGANIZATION GROUP</span>
                                <span class="pill-active d-flex align-items-center justify-content-center">ACTIVE</span>
                            </div>
                            <div class="org-link d-flex align-items-center">
                                <div class="org-icon d-flex align-items-center justify-content-center"><svg class="fi fi-576"><use href="#sitemap"/></svg></div>
                                <div>
                                    <div class="org-name">Ajumapro</div>
                                    <div class="org-id">ID AJUM2381</div>
                                </div>
                                <svg class="ln ms-auto" width="15" height="14" viewBox="0 0 15 14" stroke-width="2" color="#9a9ca6"><path d="M1 7h12.500M8 1.500L13.500 7 8 12.500"/></svg>
                            </div>
                            <div class="org-stats d-flex">
                                <div class="org-stat flex-fill w-50 d-flex flex-column align-items-center"><b>1</b><span>WORKSPACES</span></div>
                                <div class="org-stat flex-fill w-50 d-flex flex-column align-items-center"><b>1</b><span>SUBSIDIARIES</span></div>
                            </div>
                            <div class="rule mt-3"></div>
                            <div class="eyebrow eyebrow-ws">SWITCH WORKSPACE</div>
                            <div class="ws d-flex align-items-center">
                                <div class="ws-dot rounded-circle"></div>
                                <div class="ws-icon d-flex align-items-center justify-content-center"><svg class="fi"><use href="#columns"/></svg></div>
                                <div>
                                    <div class="ws-name">accra</div>
                                    <div class="ws-sub">Headquarters · US</div>
                                </div>
                                <span class="ws-tag ms-auto">ACTIVE</span>
                            </div>
                            <div class="rule" style="margin:15px 0"></div>
                            <div class="d-flex gap-2">
                                <div class="org-btn flex-fill w-50 d-flex align-items-center justify-content-center"><svg class="fi"><use href="#gear"/></svg><span>Manage</span></div>
                                <div class="org-btn org-btn-teal flex-fill w-50 d-flex align-items-center justify-content-center"><svg class="ln" width="14" height="14" viewBox="0 0 14 14" stroke-width="2"><path d="M7 1v12M1 7h12"/></svg><span>Subsidiary</span></div>
                            </div>
                        </div>

                        <nav class="side-nav d-flex flex-column">
                            <div class="nav-item-row d-flex align-items-center flex-shrink-0"><svg class="fi"><use href="#house"/></svg><span>Dashboard</span></div>
                            <div class="nav-item-row d-flex align-items-center flex-shrink-0"><svg class="fi"><use href="#chart"/></svg><span>Finance Dashboard</span></div>
                            <div class="nav-group d-flex align-items-center flex-shrink-0">
                                <svg class="ln" width="8" height="13" viewBox="0 0 8 13" stroke-width="1.8"><path d="M1 1l6 5.500L1 12"/></svg>
                                <svg class="fi fi-640"><use href="#users"/></svg>
                                <span>PEOPLE</span>
                                <span class="count ms-auto d-flex align-items-center justify-content-center">16</span>
                            </div>
                            <div class="nav-group open d-flex align-items-center flex-shrink-0">
                                <svg class="ln" width="13" height="8" viewBox="0 0 13 8" stroke-width="1.8"><path d="M1 1l5.500 5.500L12 1"/></svg>
                                <svg class="fi fi-448"><use href="#user-tie"/></svg>
                                <span>TALENT</span>
                                <span class="count ms-auto d-flex align-items-center justify-content-center">7</span>
                            </div>
                            <div class="nav-sub on d-flex align-items-center"><svg class="fi"><use href="#cells"/></svg><span>Talent hub</span></div>
                            <div class="nav-sub d-flex align-items-center"><svg class="fi"><use href="#briefcase"/></svg><span>Job Board</span></div>
                            <div class="nav-sub d-flex align-items-center"><svg class="fi"><use href="#file-lines"/></svg><span>Job Postings</span></div>
                            <div class="nav-sub d-flex align-items-center"><svg class="fi"><use href="#invoice"/></svg><span>Applications</span></div>
                            <div class="nav-sub d-flex align-items-center"><svg class="fi"><use href="#user-tie"/></svg><span>Candidates</span></div>
                            <div class="nav-sub d-flex align-items-center"><svg class="fi"><use href="#calendar"/></svg><span>Interviews</span></div>
                            <div class="nav-sub d-flex align-items-center"><svg class="fi"><use href="#chess"/></svg><span>Talent Map</span></div>
                        </nav>
                    </aside>

                    <!-- Main -->
                    <div class="pagebody flex-fill overflow-hidden">
                        <header class="top d-flex align-items-center">
                            <div class="grid-btn d-flex align-items-center justify-content-center"><svg class="fi"><use href="#grid"/></svg></div>
                            <div class="page-name text-nowrap">Talent Hub</div>
                            <div class="hq d-flex align-items-center">accra (HQ)</div>
                            <div class="code d-flex align-items-center justify-content-center"><svg class="fi fi-576"><use href="#sitemap"/></svg><span>AJUM2381</span></div>
                            <div class="find d-flex align-items-center"><svg class="fi"><use href="#search"/></svg><span>Search employees</span></div>
                            <div class="tools d-flex align-items-center">
                                <div class="clock-in d-flex align-items-center"><svg class="fi"><use href="#clock"/></svg><span>Time Clock</span></div>
                                <div class="guide d-flex align-items-center justify-content-center"><svg class="fi fi-640"><use href="#robot"/></svg><span>AI Guide</span></div>
                                <svg class="fi fi-448 bell"><use href="#bell"/></svg>
                                <div class="billing d-flex align-items-center"><svg class="fi fi-576"><use href="#crown"/></svg><span>Billing</span></div>
                            </div>
                            <div class="who">
                                <div class="who-mail">infometobi@gmail.com</div>
                                <div class="who-role">Platform Admin</div>
                            </div>
                            <div class="avatar rounded-circle d-flex align-items-center justify-content-center">U</div>
                        </header>

                        <main class="body-pad">
                            <section class="hero">
                                <div class="crumbs d-flex align-items-center"><span>Dashboard</span><svg class="ln" width="8" height="13" viewBox="0 0 8 13" stroke-width="1.8"><path d="M1 1l6 5.500L1 12"/></svg><span>Talent</span></div>
                                <h1 class="d-flex align-items-center"><svg class="fi fi-448"><use href="#user-tie"/></svg><span>Talent</span></h1>
                                <p>Recruiting, applicant tracking, succession planning, and talent mapping.</p>
                                <div class="customize d-flex align-items-center">
                                    <svg class="ln" width="23" height="20" viewBox="0 0 23 20" stroke-width="2.6"><path d="M1.500 3h4.500M11 3h10.500M1.500 10h11M17.500 10h4M1.500 17h4M10.500 17h11"/><circle cx="8.500" cy="3" r="2.200"/><circle cx="15" cy="10" r="2.200"/><circle cx="8" cy="17" r="2.200"/></svg>
                                    <span>Customize</span>
                                </div>
                            </section>

                            <div class="stat-grid">
                                <div class="tile stat d-flex align-items-center"><div class="stat-icon"><svg class="fi"><use href="#briefcase"/></svg></div><div><b>3</b><span>OPEN ROLES</span></div></div>
                                <div class="tile stat d-flex align-items-center"><div class="stat-icon"><svg class="fi fi-384"><use href="#invoice"/></svg></div><div><b>6</b><span>APPLICATIONS</span></div></div>
                                <div class="tile stat d-flex align-items-center"><div class="stat-icon"><svg class="fi"><use href="#chess"/></svg></div><div><b>0</b><span>TALENT MAPS</span></div></div>
                                <div class="tile stat d-flex align-items-center"><div class="stat-icon"><svg class="fi"><use href="#route"/></svg></div><div><b>0</b><span>CAREER PLANS</span></div></div>
                            </div>

                            <h2 class="sec-title">Modules in Talent</h2>
                            <p class="sec-sub">Jump into any tool below. Items reflect modules enabled for your organization.</p>

                            <div class="mod-grid" id="modules"></div>

                            <div class="promo-grid">
                                <div class="promo">
                                    <div class="promo-tag">SUCCESSION</div>
                                    <h3 class="d-flex align-items-center"><svg class="fi"><use href="#chess"/></svg><span>Talent map</span></h3>
                                    <p>Critical roles, readiness pipeline, 9-box grid, and successor coverage across your organization.</p>
                                </div>
                                <div class="promo">
                                    <div class="promo-tag">DEVELOPMENT</div>
                                    <h3 class="d-flex align-items-center"><svg class="fi"><use href="#route"/></svg><span>Career &amp; development</span></h3>
                                    <p>Career paths, individual plans, and development goals linked to performance and learning.</p>
                                </div>
                            </div>
                        </main>
                    </div>

                    <div class="djdt position-absolute">
                        <div class="djdt-in h-100 d-flex align-items-center justify-content-center"><span><i>D</i><i>J</i>DT</span></div>
                    </div>
                    <div class="fab fab-support position-absolute d-flex align-items-center justify-content-center"><svg class="fi fi-448"><use href="#whatsapp"/></svg><span>Support</span></div>
                    <div class="fab fab-ai position-absolute d-flex align-items-center justify-content-center"><svg class="fi fi-576"><use href="#wand"/></svg><span>Ask AI</span></div>
                </div>
            </div>
            <div class="chin d-flex align-items-center justify-content-center">MacBook Air</div>
        </div>
        <div class="position-relative">
            <div class="base-bar"></div>
            <div class="base-body"></div>
            <div class="notch position-absolute"></div>
        </div>
    </div>

    <script src="https://cdn.jsdelivr.net/npm/bootstrap@5.3.0/dist/js/bootstrap.bundle.min.js"></script>
    <script>
        const modules = [
            ['briefcase', '', 'Job Board', 'Internal and public job<br>listings.'],
            ['file-lines', 'fi-384', 'Job Postings', 'Create and manage job<br>postings.'],
            ['invoice', 'fi-384', 'Applications', 'Review incoming<br>applications.'],
            ['user-tie', 'fi-448', 'Candidates', 'Candidate pipeline and<br>profiles.'],
            ['calendar', 'fi-448', 'Interviews', 'Schedule and track<br>interviews.'],
            ['chess', '', 'Talent Map', 'Succession planning and<br>workforce maps.'],
            ['route', '', 'Career &amp; Development', 'Career paths, goals, and<br>skill development.']
        ];

        // Fill the module cards
        document.getElementById('modules').innerHTML = modules.map(([icon, cls, title, text]) => `
            <div class="tile mod d-flex align-items-start">
                <div class="mod-icon d-flex align-items-center justify-content-center flex-shrink-0"><svg class="fi ${cls}"><use href="#${icon}"/></svg></div>
                <div><h3>${title}</h3><p>${text}</p></div>
                <svg class="ln ms-auto" width="10" height="16" viewBox="0 0 10 16" stroke-width="2.2"><path d="M1.500 1l7 7-7 7"/></svg>
            </div>`).join('');
    </script>
</body>
</html>
